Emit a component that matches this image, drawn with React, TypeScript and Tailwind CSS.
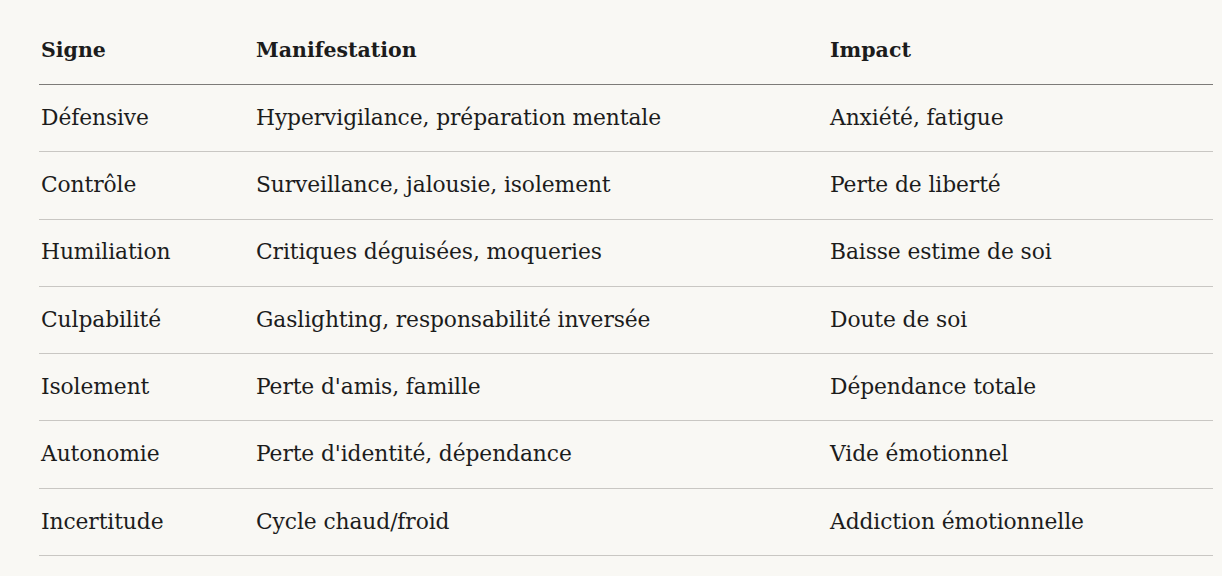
import React from "react";

const rows: [string, string, string][] = [
  ["Défensive", "Hypervigilance, préparation mentale", "Anxiété, fatigue"],
  ["Contrôle", "Surveillance, jalousie, isolement", "Perte de liberté"],
  ["Humiliation", "Critiques déguisées, moqueries", "Baisse estime de soi"],
  ["Culpabilité", "Gaslighting, responsabilité inversée", "Doute de soi"],
  ["Isolement", "Perte d'amis, famille", "Dépendance totale"],
  ["Autonomie", "Perte d'identité, dépendance", "Vide émotionnel"],
  ["Incertitude", "Cycle chaud/froid", "Addiction émotionnelle"],
];

export default function App() {
  return (
    <div
      className="w-[1222px] h-[576px] bg-[#f9f8f4] text-[#1c1c1c] overflow-hidden"
      style={{ fontFamily: '"DejaVu Serif", "Liberation Serif", serif' }}
    >
      <div className="pt-[17px] pl-[39px] w-[1213px]">
        <div className="flex h-[68px] items-center border-b border-[#7d7b78] font-bold text-[20.5px]">
          <div className="w-[215px] pl-[2px]">Signe</div>
          <div className="w-[574px] pl-[2px]">Manifestation</div>
          <div className="flex-1 pl-[2px]">Impact</div>
        </div>
        {rows.map((r, i) => (
          <div
            key={i}
            className="flex h-[67.3px] items-center border-b border-[#c9c7c3] text-[21.8px] tracking-[-0.1px]"
          >
            <div className="w-[215px] pl-[2px]">{r[0]}</div>
            <div className="w-[574px] pl-[2px]">{r[1]}</div>
            <div className="flex-1 pl-[2px]">{r[2]}</div>
          </div>
        ))}
      </div>
    </div>
  );
}
